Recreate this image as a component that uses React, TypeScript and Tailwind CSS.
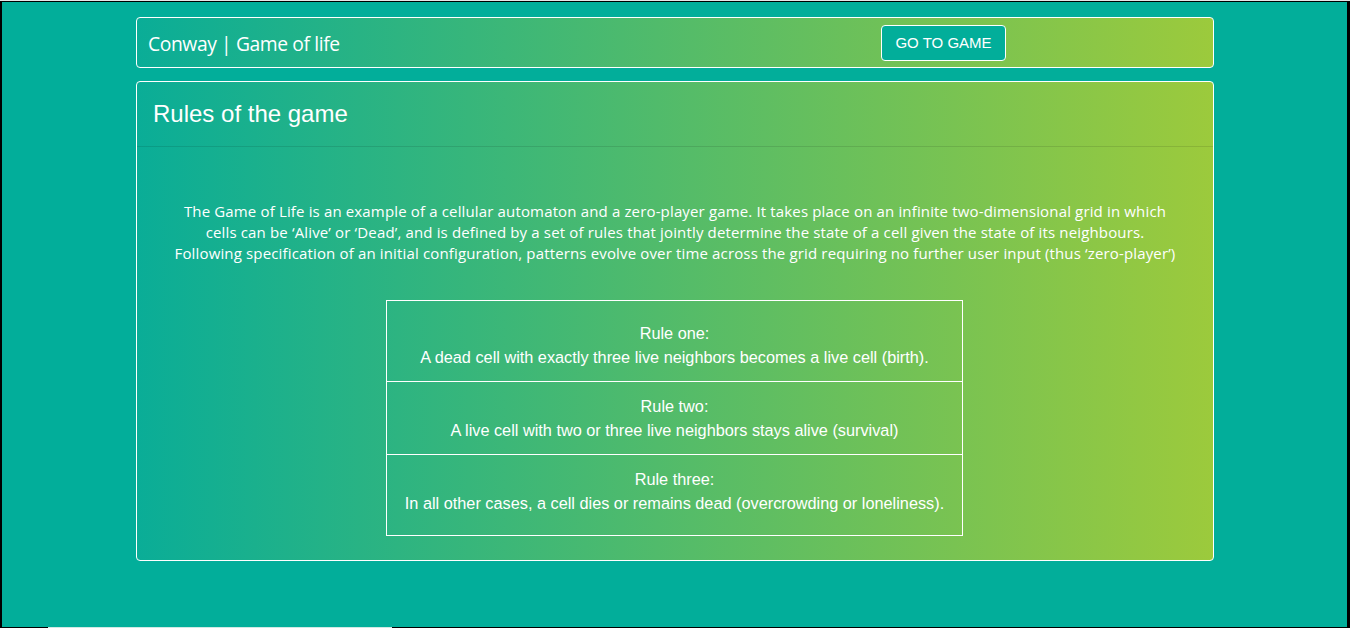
const rules = [
  { title: "Rule one:", text: "A dead cell with exactly three live neighbors becomes a live cell (birth).", pad: "pt-5 pb-3" },
  { title: "Rule two:", text: "A live cell with two or three live neighbors stays alive (survival)", pad: "py-3" },
  { title: "Rule three:", text: "In all other cases, a cell dies or remains dead (overcrowding or loneliness).", pad: "pt-3 pb-5" },
];

export default function App() {
  return (
    <div className="w-[1350px] h-[628px] bg-[#e6e6e6] pt-px overflow-hidden">
      <div className="relative h-[627px] bg-[#02ae9a] border-l-2 border-t border-r-[3px] border-b border-black">
        <div className="w-[1078px] ml-[134px] pt-[15px]">
          {/* navbar */}
          <div className="h-[51px] flex items-center rounded border border-white bg-[linear-gradient(to_right,#0aad97,#9cca3c)] pl-[11px]">
            <span className="pt-[3px] text-[19.3px] text-white font-['Open_Sans','Noto_Sans',sans-serif] tracking-[-0.4px] w-[733px]">
              Conway | Game of life
            </span>
            <button className="pt-px h-[36px] w-[125px] rounded border border-white bg-[#02ae9a] text-white text-[15px] uppercase font-['Liberation_Sans',Arial,sans-serif]">
              Go to game
            </button>
          </div>

          {/* rules card */}
          <div className="mt-[13px] h-[480px] rounded border border-white bg-[linear-gradient(to_right,#0aad97,#9cca3c)] flex flex-col">
            <div className="h-[65px] flex items-center px-[16px] border-b border-black/10">
              <h3 className="text-[24px] text-white font-['Liberation_Sans',Arial,sans-serif]">Rules of the game</h3>
            </div>
            <p className="mt-[54px] px-[20px] text-center text-[15px] leading-[21px] text-white font-['Open_Sans','Noto_Sans',sans-serif] tracking-[0.15px]">
              The Game of Life is an example of a cellular automaton and a zero-player game. It takes place on an infinite two-dimensional grid in which
              <br />
              cells can be ‘Alive’ or ‘Dead’, and is defined by a set of rules that jointly determine the state of a cell given the state of its neighbours.
              <br />
              Following specification of an initial configuration, patterns evolve over time across the grid requiring no further user input (thus ‘zero-player’)
            </p>
            <div className="mt-[36px] ml-[249px] w-[577px] border border-white font-['Liberation_Sans',Arial,sans-serif] text-white text-[16.3px] leading-[24px] text-center">
              {rules.map((r, i) => (
                <div key={r.title} className={`${r.pad} ${i > 0 ? "border-t border-white" : ""}`}>
                  <div>{r.title}</div>
                  <div>{r.text}</div>
                </div>
              ))}
            </div>
          </div>
        </div>
        <div className="absolute left-[46px] bottom-[-1px] w-[344px] h-px bg-[#cfe9e4]" />
      </div>
    </div>
  );
}
